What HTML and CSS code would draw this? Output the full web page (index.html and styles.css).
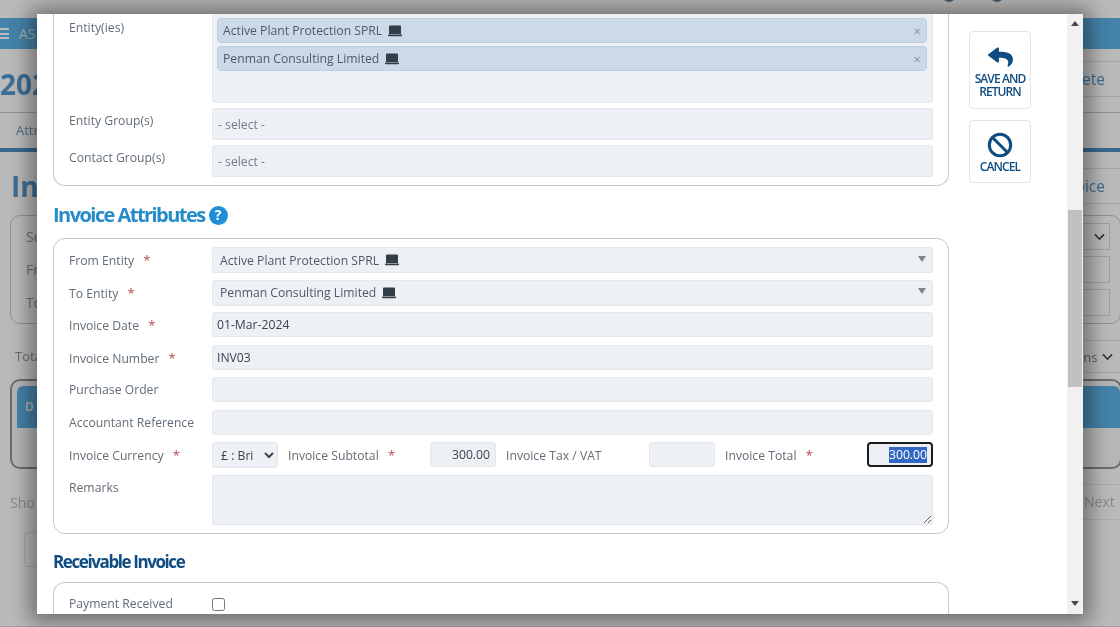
FILE: index.html
```html
<!DOCTYPE html>
<html lang="en">
<head>
<meta charset="utf-8">
<title>Invoice</title>
<link rel="stylesheet" href="styles.css">
</head>
<body>
<svg class="sprite" width="0" height="0" aria-hidden="true">
  <symbol id="laptop" viewBox="0 0 14 12">
    <path fill="#333d47" d="M2 .5h10a1 1 0 0 1 1 1V9H1V1.500a1 1 0 0 1 1-1z"/>
    <path fill="#333d47" d="M0 9.500h14v.8a1 1 0 0 1-1 1H1a1 1 0 0 1-1-1z"/>
  </symbol>
  <symbol id="chev" viewBox="0 0 12 8">
    <path fill="none" stroke="#4a4a4a" stroke-width="1.800" d="M1 1.200l5 5 5-5"/>
  </symbol>
</svg>

<div class="page">
  <div class="page-top"><span class="dot dot-a"></span><span class="dot dot-b"></span></div>
  <div class="page-nav"><span class="burger"></span><span>AS</span></div>
  <div class="page-title-row"><h1 class="page-title">202</h1><span class="page-btn">Delete</span></div>
  <div class="page-tabs"><span>Attr</span></div>
  <div class="page-sub-row"><h2 class="page-sub">Inv</h2><span class="page-btn">Invoice</span></div>
  <div class="page-filter">
    <div class="page-filter-row"><span>Se</span><span class="ghost-field"><svg class="chev"><use href="#chev"/></svg></span></div>
    <div class="page-filter-row"><span>Fr</span><span class="ghost-field"></span></div>
    <div class="page-filter-row"><span>To</span><span class="ghost-field"></span></div>
  </div>
  <div class="page-total"><span>Tota</span><span class="page-columns">Columns <svg class="chev"><use href="#chev"/></svg></span></div>
  <div class="page-table"><div class="page-table-head"><span>D</span></div></div>
  <div class="page-pager"><span>Sho</span><span class="page-next">Next</span></div>
  <div class="page-foot"></div>
  <div class="page-line"></div>
</div>

<div class="scrim"></div>

<div class="modal">
  <div class="modal-main">
    <section class="box box-clipped">
      <div class="row row-multi">
        <label class="lbl lbl-top">Entity(ies)</label>
        <div class="multi">
          <div class="chip"><span>Active Plant Protection SPRL</span><svg class="laptop"><use href="#laptop"/></svg><span class="chip-x">×</span></div>
          <div class="chip"><span>Penman Consulting Limited</span><svg class="laptop"><use href="#laptop"/></svg><span class="chip-x">×</span></div>
        </div>
      </div>
      <div class="row row-sel">
        <label class="lbl">Entity Group(s)</label>
        <div class="field select-ph">- select -</div>
      </div>
      <div class="row row-sel">
        <label class="lbl">Contact Group(s)</label>
        <div class="field select-ph">- select -</div>
      </div>
    </section>

    <h3 class="h-attr">Invoice Attributes <span class="help">?</span></h3>

    <section class="box box-attr">
      <div class="row">
        <label class="lbl">From Entity <b class="req">*</b></label>
        <div class="field combo"><span>Active Plant Protection SPRL</span><svg class="laptop"><use href="#laptop"/></svg><i class="caret"></i></div>
      </div>
      <div class="row">
        <label class="lbl">To Entity <b class="req">*</b></label>
        <div class="field combo"><span>Penman Consulting Limited</span><svg class="laptop"><use href="#laptop"/></svg><i class="caret"></i></div>
      </div>
      <div class="row">
        <label class="lbl">Invoice Date <b class="req">*</b></label>
        <input class="field input" value="01-Mar-2024">
      </div>
      <div class="row">
        <label class="lbl">Invoice Number <b class="req">*</b></label>
        <input class="field input" value="INV03">
      </div>
      <div class="row">
        <label class="lbl">Purchase Order</label>
        <input class="field input" value="">
      </div>
      <div class="row">
        <label class="lbl">Accountant Reference</label>
        <input class="field input" value="">
      </div>
      <div class="row">
        <label class="lbl">Invoice Currency <b class="req">*</b></label>
        <div class="money">
          <select class="currency"><option>£ : Bri</option></select>
          <label class="lbl-m lbl-sub">Invoice Subtotal <b class="req">*</b></label>
          <input class="field amount" value="300.00">
          <label class="lbl-m lbl-tax">Invoice Tax / VAT</label>
          <input class="field amount" value="">
          <label class="lbl-m lbl-tot">Invoice Total <b class="req">*</b></label>
          <div class="field amount amount-focus"><span class="sel">300.00</span></div>
        </div>
      </div>
      <div class="row row-remarks">
        <label class="lbl">Remarks</label>
        <textarea class="field remarks"></textarea>
      </div>
    </section>

    <h3 class="h-recv">Receivable Invoice</h3>

    <section class="box box-recv">
      <div class="row row-check">
        <label class="lbl">Payment Received</label>
        <input class="check" type="checkbox">
      </div>
    </section>
  </div>

  <aside class="modal-side">
    <button class="act act-save" type="button">
      <svg class="act-icon" viewBox="0 0 512 512" width="25" height="22" preserveAspectRatio="none"><path fill="#0f4c81" d="M8.309 189.836L184.313 37.851C199.719 24.546 224 35.347 224 56.015v80.053c160.629 1.839 288 34.032 288 186.258 0 61.441-39.581 122.309-83.333 154.132-13.653 9.931-33.111-2.533-28.077-18.631 45.344-145.012-21.507-183.51-176.59-185.742V360c0 20.7-24.3 31.453-39.687 18.164l-176.004-152c-11.071-9.562-11.086-26.753 0-36.328z"/></svg>
      <span>SAVE AND RETURN</span>
    </button>
    <button class="act act-cancel" type="button">
      <svg class="act-icon" viewBox="0 0 26 26" width="26" height="26"><circle cx="13" cy="13" r="10.700" fill="none" stroke="#0f4c81" stroke-width="3"/><path stroke="#0f4c81" stroke-width="3" d="M5.500 5.500l15 15"/></svg>
      <span>CANCEL</span>
    </button>
  </aside>

  <div class="scrollbar">
    <i class="arr arr-up"></i>
    <div class="track"><div class="thumb"></div></div>
    <i class="arr arr-down"></i>
  </div>
</div>
</body>
</html>
```

FILE: styles.css
```css
* { box-sizing: border-box; }
html, body { margin: 0; height: 100%; overflow: hidden; }
body { width: 1120px; height: 627px; position: relative; font-family: "Open Sans", sans-serif; font-size: 12.2px; background: #fff; }
.sprite { position: absolute; }

/* underlying page */
.page { height: 627px; display: flex; flex-direction: column; color: #9a9a9a; overflow: hidden; filter: blur(.6px); }
.page-top { height: 18px; position: relative; flex: none; }
.dot { position: absolute; top: -12px; width: 14px; height: 14px; border-radius: 50%; background: #5f7f99; }
.dot-a { left: 942px; }
.dot-b { left: 990px; }
.page-nav { height: 31px; flex: none; background: #5fb4ea; color: #e4f2fb; display: flex; align-items: center; gap: 10px; font-size: 14px; }
.burger { width: 9px; height: 11px; border-top: 2px solid #fff; border-bottom: 2px solid #fff; position: relative; }
.burger::after { content: ""; position: absolute; left: 0; right: 0; top: 2.500px; height: 2px; background: #fff; }
.page-title-row { height: 64px; flex: none; display: flex; justify-content: space-between; align-items: flex-start; padding: 12px 0 0; border-bottom: 1px solid #c9c9c9; }
.page-title { margin: 5px 0 0; font-size: 28px; line-height: 36px; font-weight: 700; color: #5498cf; }
.page-btn { width: 85px; height: 36px; margin-right: -10px; border: 1px solid #e2e2e2; font-size: 15.500px; line-height: 34px; color: #5498cf; padding-right: 24px; text-align: right; }
.page-tabs { height: 39px; flex: none; padding: 8px 16px 0; border-bottom: 4px solid #4f90c4; font-size: 13px; color: #6f94b3; }
.page-sub-row { height: 63px; flex: none; display: flex; justify-content: space-between; align-items: flex-start; padding: 16px 0 0 11px; }
.page-sub { margin: 0; font-size: 28px; line-height: 36px; color: #5498cf; }
.page-filter { margin: 0 -1px 0 10px; height: 109px; flex: none; border: 1px solid #c8c8c8; border-radius: 10px; padding: 7px 10px 8px 15px; display: flex; flex-direction: column; gap: 6px; }
.page-filter-row { flex: 1; display: flex; justify-content: space-between; align-items: center; font-size: 14px; }
.ghost-field { width: 60px; height: 27px; border: 1px solid #dcdcdc; display: flex; align-items: center; justify-content: flex-end; padding-right: 4px; }
.chev { width: 11px; height: 8px; }
.page-total { height: 54px; flex: none; padding: 16px 0 0 15px; display: flex; justify-content: space-between; align-items: flex-start; font-size: 13px; line-height: 32px; }
.page-columns { width: 100px; height: 33px; border: 1px solid #e2e2e2; margin-right: -7px; padding-left: 16px; display: flex; align-items: center; gap: 5px; color: #808080; }
.page-table { margin: 1px -2px 0 10px; height: 90px; flex: none; border: 2px solid #8e97a0; border-radius: 10px; padding: 5px 0 0 5px; background: #fbfbfb; }
.page-table-head { height: 42px; background: #5fb4ea; color: #e4f2fb; border-radius: 6px 6px 0 0; padding: 12px 8px; font-weight: 700; }
.page-pager { height: 63px; flex: none; padding: 3px 0 0 10px; display: flex; justify-content: space-between; align-items: center; font-size: 14px; color: #bdbdbd; }
.page-next { width: 70px; height: 36px; line-height: 34px; padding-left: 13px; border: 1px solid #ececec; margin-right: -20px; }
.page-foot { margin-left: 24px; width: 60px; height: 35px; flex: none; border: 1px solid #e6e6e6; border-radius: 3px; }
.page-line { margin-top: 59px; height: 1px; flex: none; background: #dedede; }

.scrim { position: absolute; inset: 0; background: rgba(0, 0, 0, .27); }

/* modal */
.modal { position: absolute; left: 37px; top: 14px; width: 1046px; height: 600px; background: #fff; display: flex; overflow: hidden; box-shadow: 0 1px 20px 7px rgba(0, 0, 0, .42); color: #626d78; filter: blur(.3px); }
.modal-main { width: 912px; padding: 0 0 0 16px; flex: none; }
.modal-side { flex: 1; padding: 17px 0 0 20px; display: flex; flex-direction: column; gap: 11px; align-items: flex-start; }
.scrollbar { width: 16px; flex: none; background: #f1f1f1; display: flex; flex-direction: column; align-items: center; }

.box { width: 896px; border: 1px solid #c4c8cc; border-radius: 12px; padding: 0 15px; display: flex; flex-direction: column; }
.box-clipped { height: 172px; border-top: 0; border-radius: 0 0 12px 12px; gap: 5px; }
.box-attr { height: 296px; padding-top: 8px; margin-top: 8px; }
.box-recv { height: 60px; margin-top: 9px; border-bottom: 0; border-radius: 12px 12px 0 0; padding-top: 8px; }

.row { display: flex; align-items: flex-start; }
.box-attr .row { height: 32.500px; }
.box-attr .row-remarks { height: 50px; }
.lbl { width: 143px; flex: none; font-size: 12.2px; line-height: 26px; color: #626d78; white-space: nowrap; }
.req { color: #c46a70; font-weight: 600; font-size: 13px; margin-left: 6px; }

.row-multi .lbl { line-height: 18px; padding-top: 5px; }
.row-sel .lbl { line-height: 25px; }
.row-check { align-items: center; }

.field { border: 1px solid #e3e7eb; border-radius: 3px; background: #edf1f6; font: 12.2px "Open Sans", sans-serif; color: #3a444e; }
.row > .field { flex: 1; min-width: 0; }
.multi { flex: 1; height: 89px; background: #edf1f6; border: 1px solid #e3e7eb; border-top: 0; border-radius: 0 0 4px 4px; padding: 4px 5px 4px 4px; display: flex; flex-direction: column; gap: 3px; }
.chip { height: 25px; background: #cbd9e8; border: 1px solid #bccde0; border-radius: 4px; padding: 0 5px; display: flex; align-items: center; gap: 6px; color: #4f5a66; }
.chip-x { margin-left: auto; color: #888d92; font-size: 13px; }
.laptop { width: 14px; height: 12px; flex: none; }
.row-sel .field { height: 32px; display: flex; align-items: center; padding: 0 5px; color: #737c85; }

.h-attr { margin: 14px 0 0; height: 30px; font-size: 20px; line-height: 30px; font-weight: 700; color: #268bc9; letter-spacing: -1.550px; display: flex; align-items: center; gap: 4px; }
.help { width: 19px; height: 19px; border-radius: 50%; background: #1f8fd6; color: #fff; font-size: 14px; letter-spacing: 0; display: flex; align-items: center; justify-content: center; }
.h-recv { margin: 17px 0 0; height: 22px; font-size: 17px; line-height: 22px; font-weight: 700; color: #0f4c81; letter-spacing: -1.400px; }

.combo { height: 26px; display: flex; align-items: center; gap: 6px; padding: 0 7px; color: #4f5a66; }
.caret { margin-left: auto; width: 0; height: 0; border: 4.500px solid transparent; border-top: 6px solid #7f868d; border-bottom: 0; margin-right: -1px; margin-top: -3px; }
.input { height: 25px; padding: 0 4px; outline: none; }

.money { flex: 1; display: flex; align-items: flex-start; }
.currency { width: 66px; height: 26px; flex: none; border: 1px solid #e3e7eb; border-radius: 3px; background-color: #edf1f6; font: 12.2px "Open Sans", sans-serif; color: #3a444e; padding: 0 2px 0 4px; }
.lbl-m { font-size: 12.2px; line-height: 27px; color: #626d78; flex: none; padding-left: 10px; }
.lbl-sub { width: 152px; }
.lbl-tax { width: 153px; }
.lbl-tot { width: 152px; }
.money .amount { width: 66px; height: 25px; flex: none; padding: 0 5px; text-align: right; outline: none; }
.money .amount-focus { border: 2px solid #1c1c1c; border-radius: 4px; padding: 0 4px 0 0; display: flex; align-items: center; justify-content: flex-end; }
.sel { background: #3367c4; color: #fff; line-height: 16px; }
.remarks { height: 50px; resize: both; outline: none; }
.check { width: 13px; height: 13px; margin: 0; }

/* side buttons */
.act { width: 62px; border: 1px solid #e2e4e6; border-radius: 4px; background: #fff; color: #0f4c81; font: 600 12px/13px "Open Sans", sans-serif; letter-spacing: -.9px; padding: 0; display: flex; flex-direction: column; align-items: center; }
.act-save { height: 78px; padding-top: 14px; gap: 3.500px; }
.act-cancel { height: 63px; padding-top: 11px; gap: 1.500px; }

/* scrollbar */
.arr { width: 0; height: 0; border: 4px solid transparent; flex: none; }
.arr-up { border-bottom: 5px solid #4a4a4a; border-top: 0; margin: 7px 0 6px; }
.arr-down { border-top: 5px solid #4a4a4a; border-bottom: 0; margin: 6px 0 8px; }
.track { flex: 1; width: 100%; padding: 178px 1px 0; }
.thumb { height: 177px; background: #c1c1c1; }
```
